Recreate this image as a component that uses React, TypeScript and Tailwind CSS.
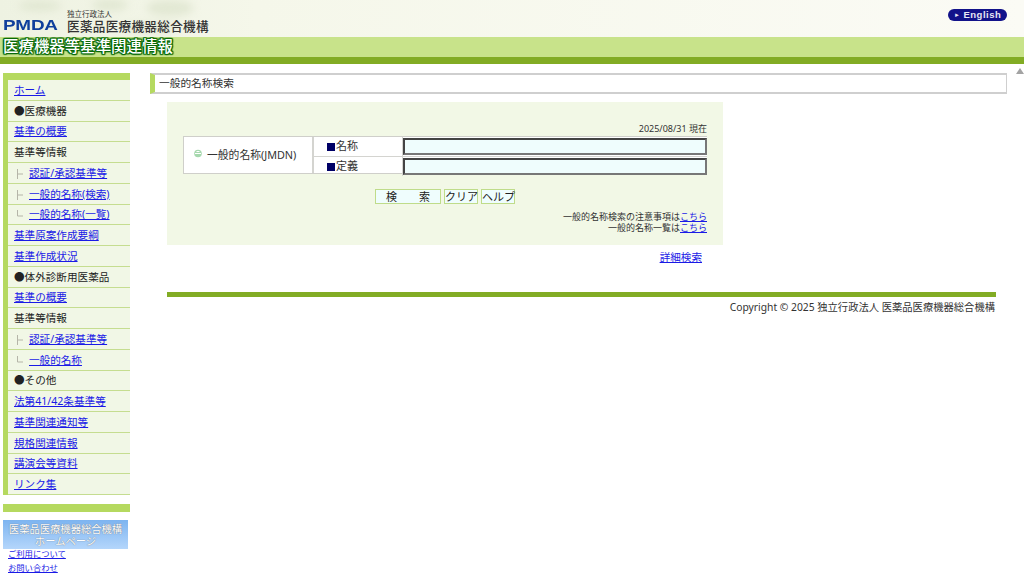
const font = "font-['Noto_Sans','Noto_Sans_CJK_JP',sans-serif]";

type NavItem = { label: string; link?: boolean; tree?: "mid" | "end" };

const navItems: NavItem[] = [
  { label: "ホーム", link: true },
  { label: "●医療機器" },
  { label: "基準の概要", link: true },
  { label: "基準等情報" },
  { label: "認証/承認基準等", link: true, tree: "mid" },
  { label: "一般的名称(検索)", link: true, tree: "mid" },
  { label: "一般的名称(一覧)", link: true, tree: "end" },
  { label: "基準原案作成要綱", link: true },
  { label: "基準作成状況", link: true },
  { label: "●体外診断用医薬品" },
  { label: "基準の概要", link: true },
  { label: "基準等情報" },
  { label: "認証/承認基準等", link: true, tree: "mid" },
  { label: "一般的名称", link: true, tree: "end" },
  { label: "●その他" },
  { label: "法第41/42条基準等", link: true },
  { label: "基準関連通知等", link: true },
  { label: "規格関連情報", link: true },
  { label: "講演会等資料", link: true },
  { label: "リンク集", link: true },
];

function TreeMark({ kind }: { kind: "mid" | "end" }) {
  return (
    <svg width="8" height="12" viewBox="0 0 8 12" className="mr-[5px] shrink-0">
      <path d={kind === "mid" ? "M1.5 1v10M1.5 6H7" : "M1.5 1v6M1.5 7H7"} stroke="#b5b5a8" fill="none" />
    </svg>
  );
}

function Sidebar() {
  return (
    <aside className="w-[131px] shrink-0 pl-[3px] pt-[9px]">
      <div className="h-[7px] w-[127px] bg-[#b5d95f]" />
      <ul className="w-[127px] border-l-[5px] border-[#b5d95f]">
        {navItems.map((item, i) => (
          <li
            key={i}
            className={`flex h-[20.75px] items-center border-b border-[#c5dd90] bg-[#f1f7e6] pt-[2px] text-[10.6px] text-[#222] ${
              item.tree ? "pl-[8px]" : "pl-[6px]"
            }`}
          >
            {item.tree ? <TreeMark kind={item.tree} /> : null}
            {item.link ? (
              <a href="#" className="text-[#1a1ae6] underline">
                {item.label}
              </a>
            ) : (
              <span>{item.label}</span>
            )}
          </li>
        ))}
      </ul>
      <div className="mt-[9px] h-[8px] w-[127px] bg-[#b5d95f]" />
      <div className="mt-[8px] flex h-[29px] w-[125px] flex-col items-center justify-center bg-gradient-to-b from-[#7db4f0] to-[#b4d6fb] text-[10.3px] leading-[12px] text-white [text-shadow:0_0_1px_#555]">
        <span>医薬品医療機器総合機構</span>
        <span>ホームページ</span>
      </div>
      <div className="ml-[5px] mt-[-2px] flex flex-col text-[8.3px] leading-[14px]">
        <a href="#" className="text-[#1a1ae6] underline">ご利用について</a>
        <a href="#" className="text-[#1a1ae6] underline">お問い合わせ</a>
      </div>
    </aside>
  );
}

function SearchForm() {
  return (
    <section className="ml-[17px] h-[143px] w-[556px] bg-[#f2f8e6] px-[16px] pt-[20px]">
      <p className="h-[14px] text-right text-[9px] leading-[14px] text-[#333]">2025/08/31 現在</p>
      <div className="flex h-[38px] border border-r-0 border-[#cfcfca] bg-white">
        <div className="flex w-[130px] shrink-0 items-center border-r-2 border-[#d4d4d0] pl-[10px] text-[10.8px] text-[#333]">
          <svg width="8" height="9" viewBox="0 0 8 9" className="mr-[5px] mt-[-4px] shrink-0">
            <circle cx="4" cy="4.5" r="3.8" fill="#a6d8ae" />
            <path d="M1 4.5h6" stroke="#fff" />
            <path d="M2.5 2.5h3" stroke="#fff" />
          </svg>
          一般的名称(JMDN)
        </div>
        <div className="flex flex-1 flex-col">
          <div className="flex flex-1 border-b border-[#d4d4d0]">
            <div className="flex w-[89px] shrink-0 items-center border-r border-[#d4d4d0] pl-[13px] text-[11px] text-[#333]">
              <span className="mr-[1px] h-[8px] w-[8px] bg-[#000066]" />
              名称
            </div>
            <input className="my-[1px] h-[17px] flex-1 border-2 border-b-[#777] border-l-[#444] border-r-[#777] border-t-[#444] bg-[#effdfd] outline-none" />
          </div>
          <div className="flex flex-1">
            <div className="flex w-[89px] shrink-0 items-center border-r border-[#d4d4d0] pl-[13px] text-[11px] text-[#333]">
              <span className="mr-[1px] h-[8px] w-[8px] bg-[#000066]" />
              定義
            </div>
            <input className="my-[1px] h-[17px] flex-1 border-2 border-b-[#777] border-l-[#444] border-r-[#777] border-t-[#444] bg-[#effdfd] outline-none" />
          </div>
        </div>
      </div>
      <div className="ml-[192px] mt-[15px] flex gap-[3px] whitespace-nowrap text-[11px] leading-none text-[#222]">
        <button type="button" className="h-[15px] w-[66px] border border-[#bfdc8a] bg-[#effdfd]">
          検<span className="ml-[22px]">索</span>
        </button>
        <button type="button" className="h-[15px] w-[34px] border border-[#bfdc8a] bg-[#effdfd]">クリア</button>
        <button type="button" className="h-[15px] w-[34px] border border-[#bfdc8a] bg-[#effdfd]">ヘルプ</button>
      </div>
      <div className="mt-[8px] text-right text-[9px] leading-[10.5px] text-[#333]">
        <p>
          一般的名称検索の注意事項は<a href="#" className="text-[#1a1ae6] underline">こちら</a>
        </p>
        <p>
          一般的名称一覧は<a href="#" className="text-[#1a1ae6] underline">こちら</a>
        </p>
      </div>
    </section>
  );
}

export default function App() {
  return (
    <div className={`relative h-[577px] w-[1024px] overflow-hidden bg-white ${font}`}>
      <header>
        <div className="relative flex h-[37px] items-end justify-between bg-gradient-to-r from-[#eef2e2] via-[#f5f7ea] via-25% to-[#fbfbf5] pl-[3px]">
          <svg width="240" height="37" viewBox="0 0 240 37" className="absolute left-0 top-0">
            <defs>
              <filter id="leaf" x="-20%" y="-20%" width="140%" height="140%">
                <feGaussianBlur stdDeviation="4" />
              </filter>
            </defs>
            <g filter="url(#leaf)" fill="#d2dbc0" opacity="0.5">
              <ellipse cx="40" cy="6" rx="22" ry="5" />
              <ellipse cx="110" cy="5" rx="18" ry="6" />
              <ellipse cx="170" cy="8" rx="24" ry="8" />
              <ellipse cx="150" cy="28" rx="30" ry="5" />
            </g>
          </svg>
          <div className="relative flex items-end">
            <span className="mb-[3px] w-[58px] origin-left scale-x-[1.22] font-['Liberation_Sans',sans-serif] text-[15.5px] font-bold leading-[18px] tracking-[-0.2px] text-[#0f3f9c]">
              PMDA
            </span>
            <div className="ml-[6px] flex flex-col text-[#333]">
              <span className="text-[7.5px] leading-[9px]">独立行政法人</span>
              <span className="mb-[2px] text-[12.6px] font-medium leading-[16px] tracking-[0.3px] text-[#333]">
                医薬品医療機器総合機構
              </span>
            </div>
          </div>
          <span className="relative mb-[16px] mr-[17px] flex h-[12px] w-[59px] items-center rounded-full bg-[#12128a] pl-[6px] font-['Liberation_Sans',sans-serif] text-[9.5px] font-bold tracking-[0.5px] text-[#e8e8f5]">
            <span className="mr-[3px] text-[6px]">►</span>
            English
          </span>
        </div>
        <div className="flex h-[20px] items-center bg-[#c8e38a] pl-[3px] text-[15.45px] font-medium leading-none text-white [text-shadow:0_0_1px_#0a6a0a,1px_1px_1px_#0a6a0a,-1px_-1px_1px_#0a6a0a,1px_-1px_1px_#0a6a0a,-1px_1px_1px_#0a6a0a,1px_0_1px_#0a6a0a,-1px_0_1px_#0a6a0a,0_1px_1px_#0a6a0a,0_-1px_1px_#0a6a0a]">
          医療機器等基準関連情報
        </div>
        <div className="h-[7px] bg-[#82ac24]" />
      </header>

      <div className="flex">
        <Sidebar />
        <main className="flex-1 pl-[19px] pt-[9px]">
          <div className="mb-[8px] flex h-[21px] w-[857px] items-center border border-[#cfcfcf] border-l-[#b5d95f] border-l-[5px] border-t-2 border-b-2 pl-[4px] text-[10.7px] text-[#333]">
            一般的名称検索
          </div>
          <SearchForm />
          <div className="ml-[17px] mt-[5px] w-[535px] text-right text-[10.6px] leading-[14px]">
            <a href="#" className="text-[#1a1ae6] underline">詳細検索</a>
          </div>
          <div className="ml-[17px] mt-[28px] h-[5px] w-[829px] bg-[#82ac24]" />
          <p className="ml-[17px] mt-[2px] w-[828px] text-right text-[10.3px] leading-[16px] text-[#333]">
            Copyright © 2025 独立行政法人 医薬品医療機器総合機構
          </p>
        </main>
      </div>

      <svg width="8" height="6" viewBox="0 0 8 6" className="absolute left-[1016px] top-[68px]">
        <path d="M4 0l4 6H0z" fill="#a3a3a3" />
      </svg>
    </div>
  );
}
